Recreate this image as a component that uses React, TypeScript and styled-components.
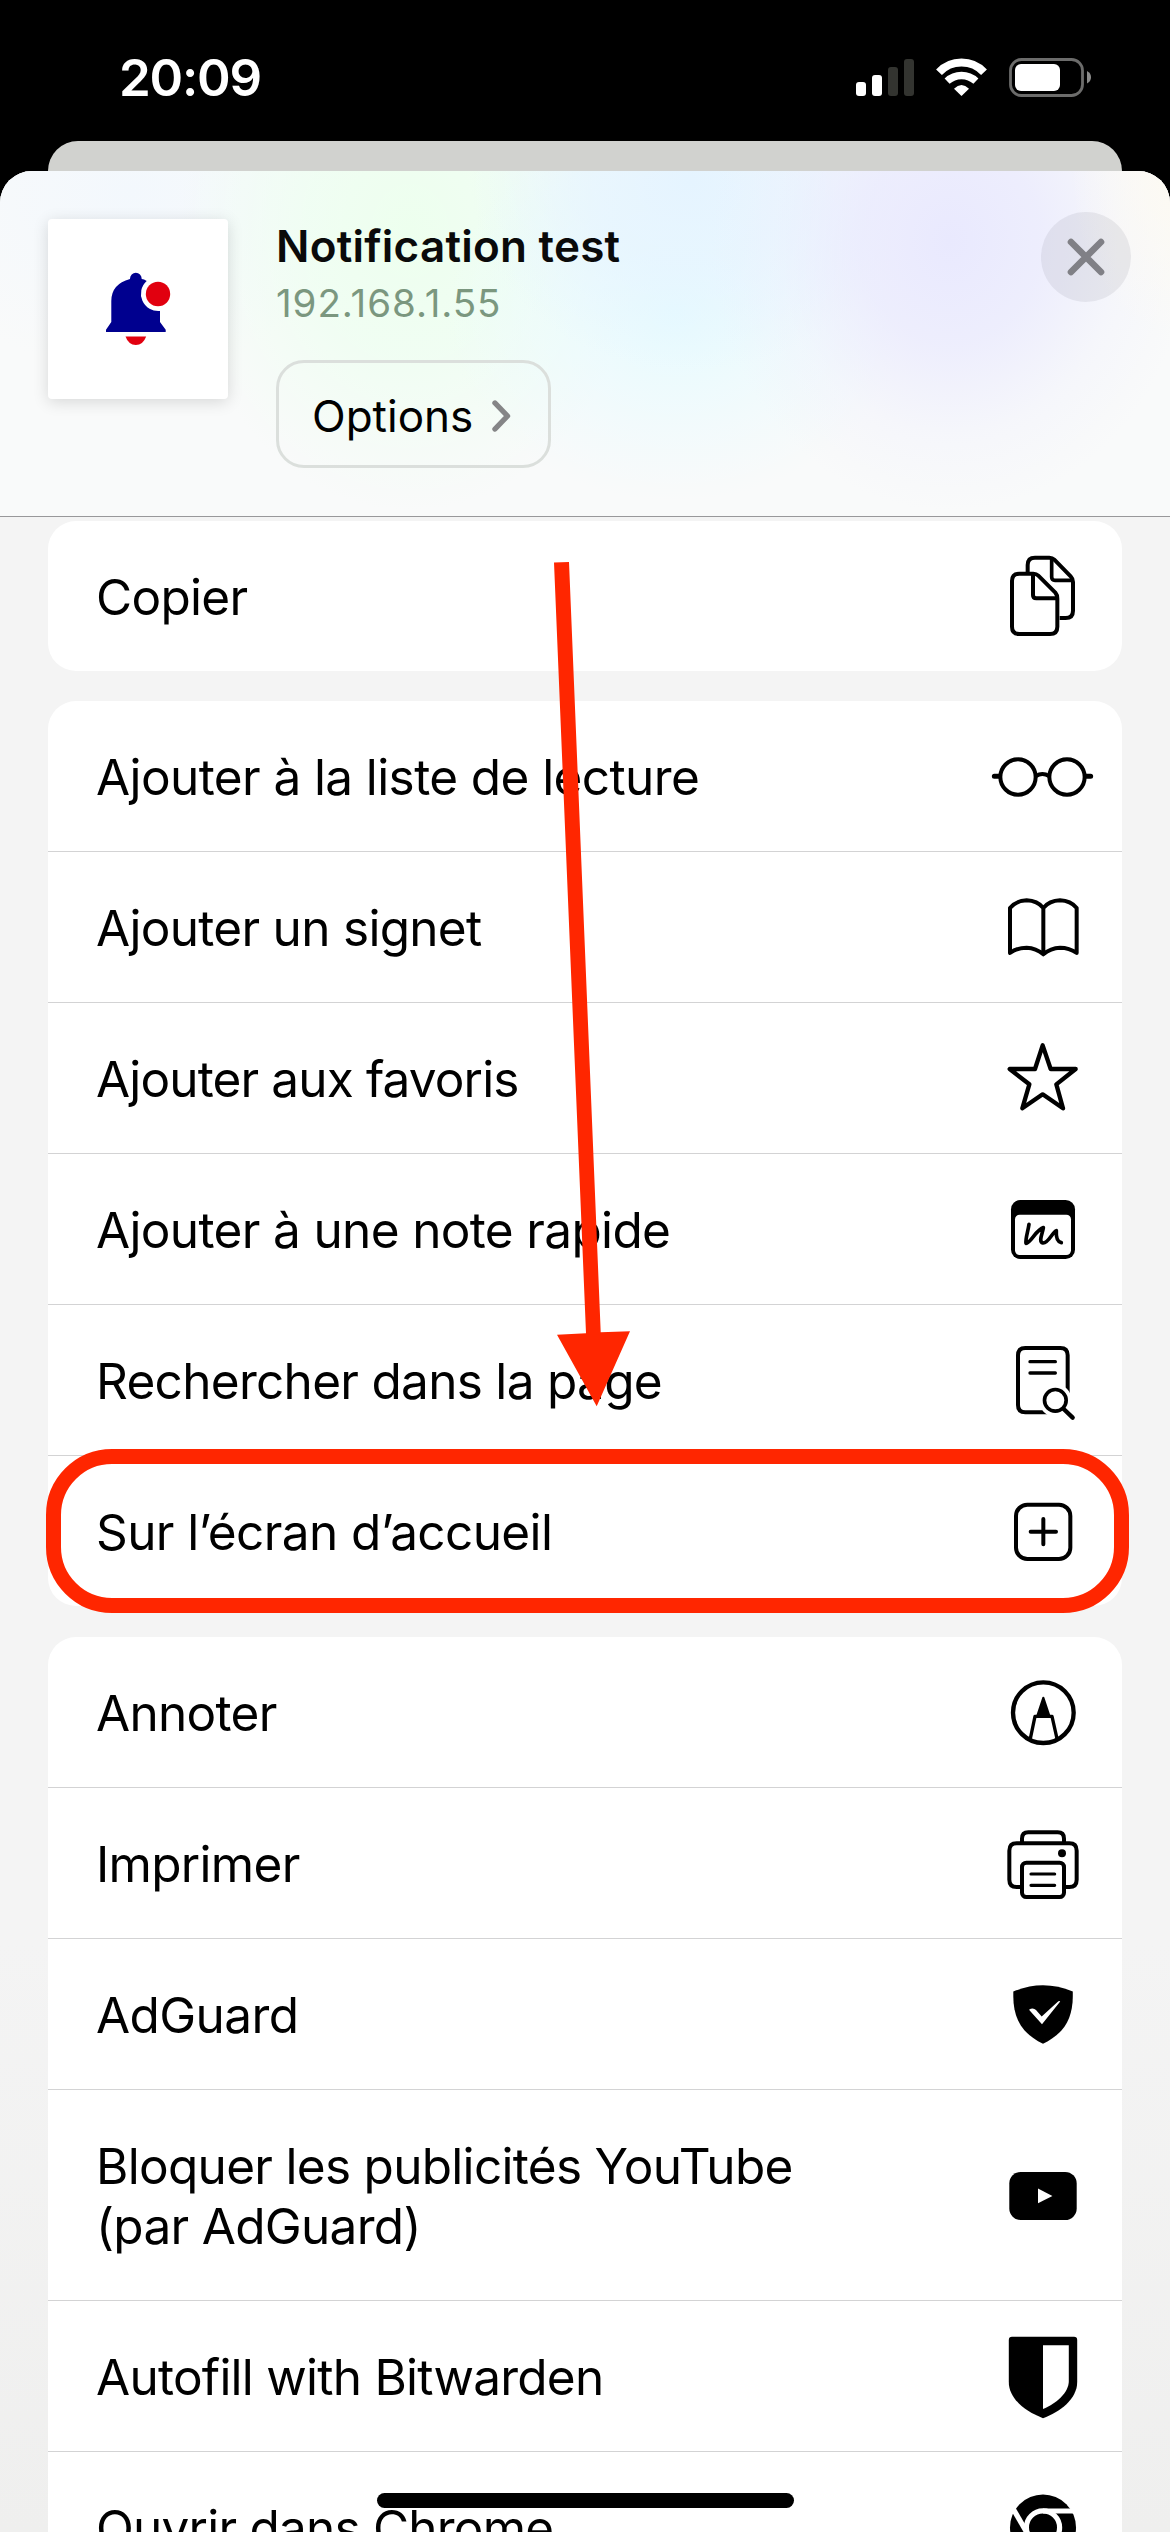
import React from "react";
import styled, { createGlobalStyle } from "styled-components";

const GlobalStyle = createGlobalStyle`
  *, *::before, *::after { box-sizing: border-box; }
  html, body { margin: 0; padding: 0; background: #000; }
  body { font-family: Inter, "Liberation Sans", sans-serif; -webkit-font-smoothing: antialiased; }
`;

const Screen = styled.div`
  position: relative;
  width: 1170px;
  height: 2532px;
  overflow: hidden;
  display: flex;
  flex-direction: column;
  background: #000;
`;

const StatusBar = styled.header`
  flex: none;
  height: 141px;
  padding: 15px 79px 0 119px;
  display: flex;
  align-items: center;
  justify-content: space-between;
`;

const Clock = styled.time`
  color: #fff;
  font-size: 51px;
  font-weight: 600;
  line-height: 60px;
  letter-spacing: -1.2px;
`;

const Indicators = styled.div`
  display: flex;
  align-items: center;
  gap: 22px;
  svg { display: block; }
`;

const BackCard = styled.div`
  flex: none;
  height: 30px;
  margin: 0 48px;
  border-radius: 30px 30px 0 0;
  background: #d1d2cf;
`;

const Sheet = styled.main`
  flex: 1;
  min-height: 0;
  overflow: hidden;
  display: flex;
  flex-direction: column;
  border-radius: 32px 32px 0 0;
  background: linear-gradient(#f4f4f4 0%, #f4f4f4 75%, #efefee 100%);
`;

const SheetHeader = styled.section`
  flex: none;
  height: 346px;
  padding: 48px 39px 0 48px;
  display: flex;
  align-items: flex-start;
  border-bottom: 1px solid #98989a;
  background:
    radial-gradient(ellipse 110px 170px at 1180px 0, #fdfaf2 0%, #fdfaf200 100%),
    radial-gradient(ellipse 240px 270px at 950px 70px, #e9e9fe 0%, #e9e9febb 38%, #ecedfe44 72%, #f1f2fd00 100%),
    radial-gradient(ellipse 220px 190px at 690px 10px, #e5f4ff 0%, #e5f4ffaa 50%, #eef8ff00 100%),
    radial-gradient(ellipse 230px 190px at 675px 140px, #e6fbff 0%, #e8fbff99 45%, #f1fbfd00 100%),
    radial-gradient(ellipse 230px 280px at 410px 60px, #edffee 0%, #edfff0bb 45%, #f4fcf600 100%),
    radial-gradient(ellipse 240px 180px at 130px 20px, #f3f8fd 0%, #f3f8fd00 100%),
    #f9fafa;
`;

const PageIcon = styled.div`
  flex: none;
  width: 180px;
  height: 180px;
  border-radius: 4px;
  background: #fff;
  box-shadow: 0 3px 16px rgba(0, 0, 0, 0.14);
  svg { display: block; }
`;

const PageInfo = styled.div`
  flex: 1;
  margin-left: 48px;
  display: flex;
  flex-direction: column;
  align-items: flex-start;
`;

const PageTitle = styled.h1`
  margin: 0;
  color: #0a0a0a;
  font-size: 44px;
  font-weight: 600;
  line-height: 54px;
  letter-spacing: 0.25px;
`;

const PageHost = styled.p`
  margin: 6px 0 0;
  color: #7b977f;
  font-size: 38.5px;
  line-height: 48px;
  letter-spacing: 0.95px;
`;

const OptionsButton = styled.button`
  width: 275px;
  height: 108px;
  margin-top: 33px;
  padding: 3px 37px 0 33px;
  display: flex;
  align-items: center;
  justify-content: space-between;
  border: 3px solid #dbdfdc;
  border-radius: 28px;
  background: transparent;
  color: #000;
  font-family: inherit;
  font-size: 44px;
  line-height: 54px;
`;

const CloseButton = styled.button`
  flex: none;
  width: 90px;
  height: 90px;
  margin-top: -7px;
  padding: 0;
  display: grid;
  place-items: center;
  border: 0;
  border-radius: 50%;
  background: rgba(118, 118, 128, 0.12);
`;

const ActionList = styled.div`
  flex: none;
  padding: 4px 48px 0;
  display: flex;
  flex-direction: column;
  gap: 30px;
`;

const ActionGroup = styled.ul`
  margin: 0;
  padding: 0;
  list-style: none;
  border-radius: 28px;
  background: #fff;
  &:last-child { margin-top: 1px; }
`;

const ActionRow = styled.li<{ $tall?: boolean }>`
  box-sizing: content-box;
  height: ${(p) => (p.$tall ? 208 : 148)}px;
  padding: 2px 19px 0 48px;
  display: flex;
  align-items: center;
  justify-content: space-between;
  &:not(:first-child) {
    border-top: 1px solid #d3d3d4;
  }
`;

const ActionLabel = styled.span<{ $tracking?: number }>`
  color: #000;
  font-size: 49.5px;
  line-height: 60px;
  letter-spacing: ${(p) => p.$tracking ?? -0.7}px;
  white-space: pre-line;
`;

const ActionIcon = styled.svg`
  flex: none;
  display: block;
  width: 120px;
  height: 120px;
  margin-top: -2px;
  fill: none;
  stroke: #000;
  stroke-width: 12;
  stroke-linecap: butt;
  stroke-linejoin: round;
`;

const Highlight = styled.div`
  position: absolute;
  left: 46px;
  top: 1449px;
  width: 1083px;
  height: 164px;
  border: 15px solid #ff2600;
  border-radius: 66px;
`;

const Arrow = styled.svg`
  position: absolute;
  left: 540px;
  top: 550px;
`;

const HomeIndicator = styled.div`
  position: absolute;
  left: 377px;
  top: 2493px;
  width: 417px;
  height: 15px;
  border-radius: 8px;
  background: #000;
`;

type Action = { label: string; icon: React.ReactNode; tall?: boolean; tracking?: number };

const copy = (
  <ActionIcon viewBox="69 48 360 360">
    <path d="M203 156V135q0-22 22-22H268q9 0 15 6L332 169Q339 176 339 186V272q0 22-22 22H299" />
    <path d="M275 116V171q0 10 10 10H337" strokeWidth="11" />
    <path d="M178 161H220q9 0 15 6L286 218Q292 225 292 236V320q0 22-22 22H178q-22 0-22-22V183q0-22 22-22z" />
    <path d="M219 163V225q0 10 10 10H290" />
  </ActionIcon>
);

const glasses = (
  <ActionIcon viewBox="69 588 360 360">
    <circle cx="174" cy="771" r="53" />
    <circle cx="321" cy="771" r="53" />
    <path d="M228 768Q247 756 267 768" />
    <path d="M103 769H118M377 769H392" strokeWidth="15" strokeLinecap="round" />
  </ActionIcon>
);

const book = (
  <ActionIcon viewBox="69 1041 360 360">
    <path d="M150 1164Q168 1142 200 1141Q232 1142 250 1164Q268 1142 300 1141Q332 1142 350 1164V1299Q328 1283 300 1283Q272 1284 250 1303Q228 1284 200 1283Q172 1283 150 1299ZM250 1164V1303" />
  </ActionIcon>
);

const star = (
  <ActionIcon viewBox="69 114 360 360">
    <path d="M248 196L272 267H347L289 313L309 385L248 343L187 385L208 313L149 267H225Z" strokeWidth="13" />
  </ActionIcon>
);

const quickNote = (
  <ActionIcon viewBox="69 567 360 360">
    <rect x="153" y="660" width="192" height="177" rx="28" fill="#000" stroke="none" />
    <rect x="165" y="704" width="168" height="121" rx="14" fill="#fff" stroke="none" />
    <path
      d="M207 733C204 755 196 775 198 790C210 792 230 747 250 743C248 760 234 785 249 789C266 790 278 755 289 752C288 770 292 786 304 788"
      strokeWidth="11"
      strokeLinecap="round"
    />
  </ActionIcon>
);

const findInPage = (
  <ActionIcon viewBox="69 1020 360 360">
    <path d="M323 1240V1126q0-22-22-22H196q-22 0-22 22V1275q0 22 22 22H262" />
    <path d="M210 1145H286M210 1179H286" strokeWidth="10" strokeLinecap="round" />
    <circle cx="286" cy="1261" r="49" fill="#fff" stroke="none" />
    <circle cx="286" cy="1261" r="32.5" strokeWidth="11" />
    <path d="M311 1287L338 1313" strokeWidth="13" strokeLinecap="round" />
  </ActionIcon>
);

const addToHome = (
  <ActionIcon viewBox="69 93 360 360">
    <rect x="168" y="194" width="163" height="163" rx="34" />
    <path d="M212 275H288M250 237V313" strokeLinecap="round" />
  </ActionIcon>
);

const markup = (
  <ActionIcon viewBox="69 636 360 360">
    <circle cx="250" cy="818" r="91" strokeWidth="13" />
    <path d="M211 896L225 829H276L291 896" strokeWidth="10" />
    <path d="M250 773L231 830H269Z" fill="#000" strokeWidth="6" />
  </ActionIcon>
);

const printer = (
  <ActionIcon viewBox="69 1089 360 360">
    <path d="M186 1207V1196q0-19 19-19H293q19 0 19 19V1207" />
    <path d="M186 1341H170q-22 0-22-22V1232q0-22 22-22H328q22 0 22 22V1319q0 22-22 22H312" />
    <rect x="186" y="1268" width="126" height="103" rx="13" />
    <path d="M213 1302H284M213 1336H284" strokeWidth="9.5" strokeLinecap="round" />
    <circle cx="306" cy="1240" r="12" fill="#000" stroke="none" />
  </ActionIcon>
);

const adguard = (
  <ActionIcon viewBox="983 1954 120 120">
    <path
      d="M1013.3 1991.5Q1043 1979 1072.8 1991.5V1996C1072.8 2020 1063 2034 1043 2043.8C1023 2034 1013.3 2020 1013.3 1996Z"
      fill="#000"
      stroke="none"
    />
    <path
      d="M1029 2009.7Q1033 2007 1036 2010L1041.7 2016.4L1057 2002.4Q1059.5 2000.3 1060.2 2001.5L1042 2024.3Z"
      fill="#fff"
      stroke="none"
    />
  </ActionIcon>
);

const youtube = (
  <ActionIcon viewBox="983 2135 120 120">
    <rect x="1009.3" y="2172" width="67.4" height="48" rx="11.5" fill="#000" stroke="none" />
    <path d="M1038 2188.5L1052.4 2196L1038 2203.3Z" fill="#fff" stroke="none" />
  </ActionIcon>
);

const bitwarden = (
  <ActionIcon viewBox="983 2316 120 120">
    <path
      d="M1012 2336.8H1074Q1077.2 2336.8 1077.2 2340V2382C1077.2 2399 1060 2412 1043 2418.2C1026 2412 1008.8 2399 1008.8 2382V2340Q1008.8 2336.8 1012 2336.8Z"
      fill="#000"
      stroke="none"
    />
    <path d="M1043 2345.2H1068.8V2381C1068.8 2393 1056 2403.5 1043 2409Z" fill="#fff" stroke="none" />
  </ActionIcon>
);

const chrome = (
  <ActionIcon viewBox="983 2467 120 120">
    <circle cx="1043" cy="2527.5" r="33" fill="#000" stroke="none" />
    <g stroke="#fff" strokeWidth="5.2">
      <circle cx="1043" cy="2527.5" r="16.6" />
      <path d="M1043 2511H1080" />
      <path d="M1043 2511H1080" transform="rotate(120 1043 2527.5)" />
      <path d="M1043 2511H1080" transform="rotate(240 1043 2527.5)" />
    </g>
  </ActionIcon>
);

const groups: Action[][] = [
  [{ label: "Copier", icon: copy }],
  [
    { label: "Ajouter à la liste de lecture", icon: glasses, tracking: -0.6 },
    { label: "Ajouter un signet", icon: book },
    { label: "Ajouter aux favoris", icon: star, tracking: -0.86 },
    { label: "Ajouter à une note rapide", icon: quickNote, tracking: -0.65 },
    { label: "Rechercher dans la page", icon: findInPage },
    { label: "Sur l’écran d’accueil", icon: addToHome, tracking: -0.6 },
  ],
  [
    { label: "Annoter", icon: markup },
    { label: "Imprimer", icon: printer },
    { label: "AdGuard", icon: adguard, tracking: -0.6 },
    { label: "Bloquer les publicités YouTube\n(par AdGuard)", icon: youtube, tall: true },
    { label: "Autofill with Bitwarden", icon: bitwarden, tracking: -0.75 },
    { label: "Ouvrir dans Chrome", icon: chrome, tracking: -0.78 },
  ],
];

export default function App() {
  return (
    <Screen>
      <GlobalStyle />
      <StatusBar>
        <Clock>20:09</Clock>
        <Indicators>
          <svg width="58" height="40" viewBox="0 0 58 40">
            <rect x="0" y="24" width="10" height="14" rx="3" fill="#fff" />
            <rect x="16" y="17" width="10" height="21" rx="3" fill="#fff" />
            <rect x="32" y="9" width="10" height="29" rx="3" fill="#333430" />
            <rect x="48" y="1" width="10" height="37" rx="3" fill="#333430" />
          </svg>
          <svg width="51" height="40" viewBox="0 0 51 40">
            <g fill="none" stroke="#fff">
              <path d="M3 14.300A31 31 0 0 1 48 14.300" strokeWidth="8" />
              <path d="M11.100 23.200A21 21 0 0 1 39.900 23.200" strokeWidth="7.300" />
            </g>
            <path d="M25.500 38L18 30.700Q25.500 23.500 33 30.700Z" fill="#fff" />
          </svg>
          <svg width="82" height="40" viewBox="0 0 82 40">
            <rect x="1.500" y="1.500" width="72" height="36" rx="11" fill="none" stroke="#6c6c6b" strokeWidth="2.800" />
            <rect x="6" y="6" width="45" height="27" rx="6" fill="#fff" />
            <path d="M78 13Q82 15 82 19.300T78 25.500Z" fill="#8a8a89" />
          </svg>
        </Indicators>
      </StatusBar>
      <BackCard />
      <Sheet>
        <SheetHeader>
          <PageIcon>
            <svg width="180" height="180" viewBox="48 219 180 180">
              <path
                d="M106 332V329.800L111.300 322V301Q111.300 284 130 279V278.700A5.800 5.800 0 0 1 141.700 278.700V279Q144 279.300 146.700 280.900A17.300 17.300 0 0 0 160 311V322L165.700 329.800V332Z"
                fill="#00008f"
              />
              <circle cx="158" cy="294" r="12.200" fill="#e1000f" />
              <path d="M125.500 336.500H146.200Q143 345 135.800 345T125.500 336.500Z" fill="#e1000f" />
            </svg>
          </PageIcon>
          <PageInfo>
            <PageTitle>Notification test</PageTitle>
            <PageHost>192.168.1.55</PageHost>
            <OptionsButton>
              Options
              <svg width="19" height="36" viewBox="0 0 19 36">
                <path
                  d="M3 5L15.500 18L3 31"
                  fill="none"
                  stroke="#858587"
                  strokeWidth="5.400"
                  strokeLinecap="round"
                  strokeLinejoin="round"
                />
              </svg>
            </OptionsButton>
          </PageInfo>
          <CloseButton aria-label="Fermer">
            <svg width="40" height="40" viewBox="0 0 40 40">
              <path d="M5 5L35 35M35 5L5 35" stroke="#808086" strokeWidth="6.600" strokeLinecap="round" />
            </svg>
          </CloseButton>
        </SheetHeader>
        <ActionList>
          {groups.map((actions, i) => (
            <ActionGroup key={i}>
              {actions.map((a) => (
                <ActionRow key={a.label} $tall={a.tall}>
                  <ActionLabel $tracking={a.tracking}>{a.label}</ActionLabel>
                  {a.icon}
                </ActionRow>
              ))}
            </ActionGroup>
          ))}
        </ActionList>
      </Sheet>
      <Arrow width="110" height="870" viewBox="540 550 110 870" fill="#ff2600">
        <path d="M554 562.500L569 562L600.700 1332.300L630 1331.300L596.700 1406.300L557 1334.800L586 1333.300Z" />
      </Arrow>
      <Highlight />
      <HomeIndicator />
    </Screen>
  );
}
